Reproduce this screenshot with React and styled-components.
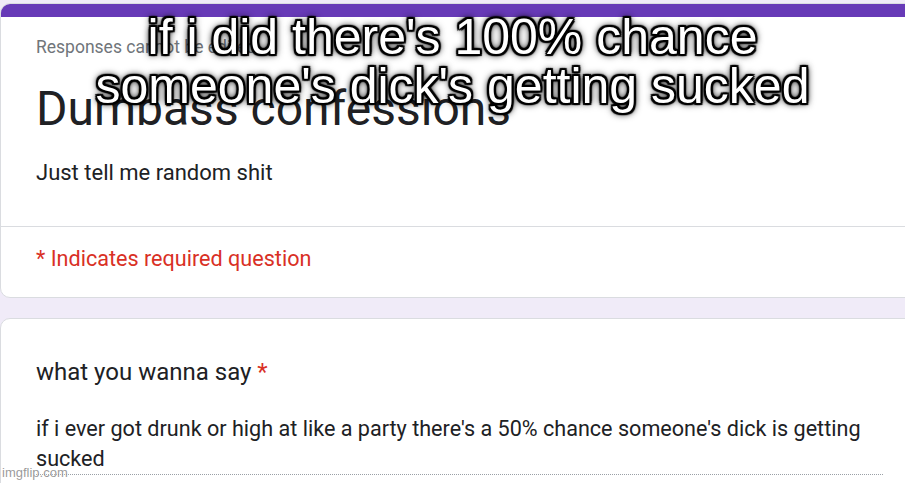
import React from "react";
import styled, { createGlobalStyle } from "styled-components";

const GlobalStyle = createGlobalStyle`
    html, body {
        margin: 0;
        padding: 0;
        background: #f0ebf8;
        overflow: hidden;
    }
    body {
        font-family: Roboto, "Liberation Sans", Arial, sans-serif;
        color: #202124;
    }
`

const Page = styled.div`
    position: relative;
    width: 905px;
    height: 483px;
    overflow: hidden;
    padding-top: 3px;
    box-sizing: border-box;
`

const Cards = styled.div`
    display: flex;
    flex-direction: column;
    gap: 20px;
    width: 940px;
`

const Card = styled.div`
    background: #fff;
    border: 1px solid #dadce0;
    border-radius: 10px;
    overflow: hidden;
`

const TopBar = styled.div`
    height: 14px;
    background: #673ab7;
    margin: -1px -1px 0 -1px;
`

const Section = styled.div`
    padding: ${(p) => p.$pad};
    border-bottom: ${(p) => (p.$divided ? "1px solid #dadce0" : "none")};
`

const Notice = styled.div`
    font-size: 17.5px;
    line-height: 20px;
    color: #70757a;
`

const Title = styled.h1`
    margin: 24px 0 0;
    font-weight: 400;
    font-size: 48px;
    line-height: 56px;
    color: #202124;
`

const Description = styled.p`
    margin: 22px 0 0;
    font-size: 22px;
    line-height: 28px;
`

const Required = styled.div`
    font-size: 21.6px;
    line-height: 28px;
    color: #d93025;
`

const Question = styled.div`
    font-size: 24px;
    line-height: 30px;
    color: #202124;
`

const Star = styled.span`
    color: #d93025;
`

const Answer = styled.div`
    width: 847px;
    margin-top: 27px;
    font-size: 21.6px;
    line-height: 30px;
    color: #202124;
    border-bottom: 1px dotted #9aa0a6;
`

const Caption = styled.div`
    position: absolute;
    top: 13px;
    left: 0;
    width: 905px;
    text-align: center;
    font-family: "Liberation Sans", Arial, sans-serif;
    font-size: 50px;
    line-height: 49px;
    color: #fff;
    text-shadow:
        2px 2px 1px #000, -2px -2px 1px #000, 2px -2px 1px #000, -2px 2px 1px #000,
        0 2px 1px #000, 2px 0 1px #000, 0 -2px 1px #000, -2px 0 1px #000,
        0 0 6px #000, 0 0 9px rgba(0, 0, 0, 0.85);
`

const Watermark = styled.div`
    position: absolute;
    left: 2px;
    bottom: 3px;
    font-family: "Liberation Sans", Arial, sans-serif;
    font-size: 13px;
    line-height: 14px;
    color: rgba(120, 120, 120, 0.75);
    text-shadow: 0 0 2px #fff;
`

export default function App() {
    return (
        <Page>
            <GlobalStyle />
            <Cards>
                <Card>
                    <TopBar />
                    <Section $pad="20px 0 39px 35px" $divided>
                        <Notice>Responses cannot be edited</Notice>
                        <Title>Dumbass confessions</Title>
                        <Description>Just tell me random shit</Description>
                    </Section>
                    <Section $pad="18px 0 24px 35px">
                        <Required>* Indicates required question</Required>
                    </Section>
                </Card>
                <Card>
                    <Section $pad="38px 0 40px 35px">
                        <Question>
                            what you wanna say <Star>*</Star>
                        </Question>
                        <Answer>
                            if i ever got drunk or high at like a party there's a 50% chance
                            someone's dick is getting sucked
                        </Answer>
                    </Section>
                </Card>
            </Cards>
            <Caption>
                if i did there's 100% chance
                <br />
                someone's dick's getting sucked
            </Caption>
            <Watermark>imgflip.com</Watermark>
        </Page>
    );
}
